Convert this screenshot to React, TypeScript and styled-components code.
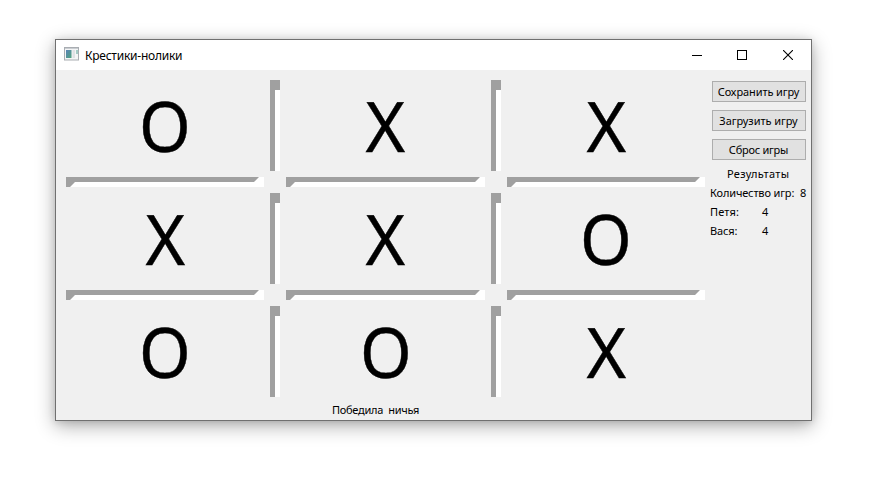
import React from "react";
import styled, { createGlobalStyle } from "styled-components";

const GlobalStyle = createGlobalStyle`
  body { margin: 0; background: #fff; overflow: hidden; }
  * { box-sizing: border-box; }
`;

const Desktop = styled.main`
  height: 494px;
  padding: 39px 0 0 55px;
  background: #fff;
`;

const Window = styled.section`
  width: 757px;
  height: 382px;
  border: 1px solid #707070;
  background: #f0f0f0;
  box-shadow: 0 5px 18px rgba(0, 0, 0, 0.32), 0 1px 7px rgba(0, 0, 0, 0.12);
  font-family: "Noto Sans", "Open Sans", sans-serif;
  color: #000;
`;

const TitleBar = styled.header`
  display: flex;
  align-items: center;
  height: 30px;
  padding-left: 8px;
  background: #fff;
`;

const AppIcon = styled.svg`
  display: block;
  width: 15px;
  height: 14px;
  margin-top: -2px;
`;

const Label = styled.span<{ $spacing?: number; $size?: number }>`
  font-size: ${(p) => p.$size ?? 11}px;
  letter-spacing: ${(p) => p.$spacing ?? 0}px;
  line-height: 19px;
  white-space: pre;
`;

const Title = styled.h1`
  flex: 1;
  display: flex;
  margin: 0;
  padding-left: 6px;
  font-weight: 400;
`;

const Controls = styled.nav`
  display: flex;
`;

const ControlButton = styled.button<{ $width: number }>`
  display: flex;
  align-items: center;
  justify-content: center;
  width: ${(p) => p.$width}px;
  height: 30px;
  padding: 0;
  border: 0;
  background: none;
`;

const Content = styled.div`
  display: flex;
  padding: 10px 5px 0 10px;
`;

const BoardColumn = styled.div`
  width: 639px;
`;

const Board = styled.div`
  display: grid;
  grid-template-columns: 198px 10px 199px 10px 198px;
  grid-template-rows: 91px 10px 91px 10px 91px;
  gap: 6px;
`;

const Cell = styled.div`
  display: flex;
  align-items: center;
  justify-content: center;
  font-size: 69px;
  line-height: 91px;
  -webkit-text-stroke: 0.4px #000;
`;

const Mark = styled.span<{ $stretch: number }>`
  display: block;
  transform: scaleX(${(p) => p.$stretch});
`;

const VerticalBar = styled.div`
  border-top: 10px solid #a0a0a0;
  border-left: 5px solid #a0a0a0;
  background: #fff;
`;

const HorizontalBar = styled.div`
  background: #fff;

  &::before {
    content: "";
    display: block;
    height: 10px;
    background: #a0a0a0;
    clip-path: polygon(0 0, calc(100% - 5px) 0, calc(100% - 10px) 5px, 9px 5px, 4px 10px, 0 10px);
  }
`;

const Status = styled.div`
  display: flex;
  justify-content: center;
  padding: 3px 20px 0 0;
`;

const Sidebar = styled.aside`
  display: flex;
  flex-direction: column;
  width: 101px;
  padding-top: 1px;
`;

const Actions = styled.div`
  display: flex;
  flex-direction: column;
  gap: 8px;
  padding: 0 0 0 7px;
`;

const ActionButton = styled.button`
  display: flex;
  align-items: center;
  justify-content: center;
  width: 94px;
  height: 21px;
  padding: 0 1px 0 0;
  border: 1px solid #adadad;
  background: #e1e1e1;
  font-family: inherit;
  color: inherit;
`;

const Results = styled.div`
  display: flex;
  flex-direction: column;
  padding: 4px 0 0 5px;
`;

const Heading = styled.div`
  display: flex;
  height: 19px;
  padding-left: 17px;
`;

const Row = styled.div<{ $labelWidth: number }>`
  display: grid;
  grid-template-columns: ${(p) => p.$labelWidth}px auto;
  height: 19px;
`;

const marks = [
  ["O", "X", "X"],
  ["X", "X", "O"],
  ["O", "O", "X"],
];

const actions = [
  { text: "Сохранить игру", spacing: -0.1 },
  { text: "Загрузить игру", spacing: -0.05 },
  { text: "Сброс игры", spacing: -0.25 },
];

const results = [
  { name: "Количество игр:", value: 8, width: 90, spacing: -0.15 },
  { name: "Петя:", value: 4, width: 52, spacing: 0.1 },
  { name: "Вася:", value: 4, width: 52, spacing: -0.1 },
];

const BoardCell = ({ mark }: { mark: string }) => (
  <Cell>
    <Mark $stretch={mark === "O" ? 0.96 : 0.98}>{mark}</Mark>
  </Cell>
);

export default function App() {
  return (
    <>
      <GlobalStyle />
      <Desktop>
        <Window>
          <TitleBar>
            <AppIcon viewBox="0 0 15 14">
              <defs>
                <linearGradient id="pane" x1="0" y1="0" x2="1" y2="1">
                  <stop offset="0" stopColor="#5b84b8" />
                  <stop offset="1" stopColor="#4fa37c" />
                </linearGradient>
              </defs>
              <rect x="0.5" y="0.5" width="14" height="12.5" fill="#f4f5f6" stroke="#a9adb2" />
              <rect x="1" y="1" width="13" height="1" fill="#c9cdd1" />
              <rect x="2" y="3" width="5.5" height="8" fill="url(#pane)" />
              <rect x="8.5" y="3" width="2.5" height="8" fill="#dfe2e5" />
              <rect x="12" y="3" width="2" height="4" fill="#a5cbc6" />
            </AppIcon>
            <Title>
              <Label $size={12} $spacing={-0.24}>Крестики-нолики</Label>
            </Title>
            <Controls>
              <ControlButton $width={45} aria-label="Свернуть">
                <svg width="10" height="10" shapeRendering="crispEdges">
                  <path d="M0 5.5H10" stroke="#000" />
                </svg>
              </ControlButton>
              <ControlButton $width={45} aria-label="Развернуть">
                <svg width="10" height="10" shapeRendering="crispEdges">
                  <rect x="0.5" y="0.5" width="9" height="9" fill="none" stroke="#000" />
                </svg>
              </ControlButton>
              <ControlButton $width={47} aria-label="Закрыть">
                <svg width="10" height="10">
                  <path d="M0 0L10 10M10 0L0 10" stroke="#000" strokeWidth="1.1" />
                </svg>
              </ControlButton>
            </Controls>
          </TitleBar>
          <Content>
            <BoardColumn>
              <Board>
                {marks.map((row, r) => (
                  <React.Fragment key={r}>
                    <BoardCell mark={row[0]} />
                    <VerticalBar />
                    <BoardCell mark={row[1]} />
                    <VerticalBar />
                    <BoardCell mark={row[2]} />
                    {r < 2 && (
                      <>
                        <HorizontalBar />
                        <span />
                        <HorizontalBar />
                        <span />
                        <HorizontalBar />
                      </>
                    )}
                  </React.Fragment>
                ))}
              </Board>
              <Status>
                <Label $spacing={-0.28}>{"Победила  ничья"}</Label>
              </Status>
            </BoardColumn>
            <Sidebar>
              <Actions>
                {actions.map((a) => (
                  <ActionButton key={a.text}>
                    <Label $spacing={a.spacing}>{a.text}</Label>
                  </ActionButton>
                ))}
              </Actions>
              <Results>
                <Heading>
                  <Label $spacing={0.3}>Результаты</Label>
                </Heading>
                {results.map((r) => (
                  <Row key={r.name} $labelWidth={r.width}>
                    <Label $spacing={r.spacing}>{r.name}</Label>
                    <Label>{r.value}</Label>
                  </Row>
                ))}
              </Results>
            </Sidebar>
          </Content>
        </Window>
      </Desktop>
    </>
  );
}
